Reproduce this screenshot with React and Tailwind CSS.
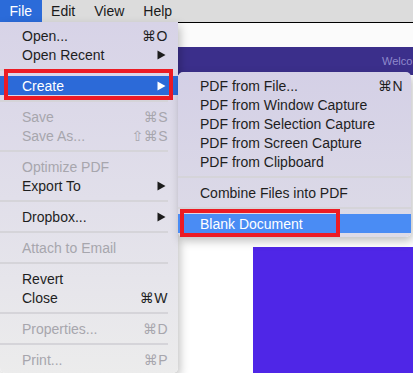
import React from 'react';

const FONT = { fontFamily: '"Liberation Sans", Arial, "DejaVu Sans", sans-serif' };

function Arrow({ white }) {
  return (
    <svg width="9" height="10" viewBox="0 0 9 10" className="shrink-0">
      <polygon points="0.5,0.5 8.5,5 0.5,9.5" fill={white ? '#ffffff' : '#1c1c1c'} />
    </svg>
  );
}

function Item({ label, shortcut, arrow, disabled, active, activeColor, box, boxClass }) {
  const text = active ? 'text-white' : disabled ? 'text-[#a7a6ad]' : 'text-[#1e1e1e]';
  return (
    <div
      className={`relative h-[19px] flex items-center justify-between pl-[22px] ${text} ${active ? activeColor : ''}`}
    >
      <span>{label}</span>
      {shortcut && <span className="tracking-[0.5px]">{shortcut}</span>}
      {arrow && (
        <span className="pr-[2px]">
          <Arrow white={active} />
        </span>
      )}
      {box && <div className={`absolute border-[4px] border-[#ec1b24] ${boxClass}`} />}
    </div>
  );
}

function Sep() {
  return (
    <div className="h-[12px] flex items-center">
      <div className="w-full h-[2px] bg-[#d5d4d9]" />
    </div>
  );
}

export default function App() {
  return (
    <div className="relative w-[413px] h-[373px] overflow-hidden bg-white text-[14px] leading-none" style={FONT}>
      {/* menu bar */}
      <div className="h-[22px] bg-[#dcdcdc] flex items-center text-[#1a1a1a]">
        <div className="h-full flex items-center px-[9.5px] bg-[#2b6bd9] text-white">File</div>
        <div className="h-full flex items-center px-[9.5px]">Edit</div>
        <div className="h-full flex items-center px-[9.5px]">View</div>
        <div className="h-full flex items-center px-[9.5px]">Help</div>
      </div>

      {/* app window behind */}
      <div className="border-t border-black">
        <div className="h-[24px] bg-[#fbfbfb]" />
        <div className="h-[28px] bg-[#3b2f8b] flex items-center pl-[382px] overflow-hidden">
          <span className="text-[11px] text-[#8f89cb] whitespace-nowrap">Welco</span>
        </div>
        <div className="pt-[172px] pl-[253px]">
          <div className="h-[130px] bg-[#4f26e7]" />
        </div>
      </div>

      {/* File menu */}
      <div className="absolute left-0 top-[22px] w-[178px] h-[351px] pt-[4px] pb-[4px] pr-[10px] rounded-b-[5px] bg-gradient-to-b from-[#d7d3e7] via-[#e1dfea] to-[#ececec] shadow-[2px_4px_10px_rgba(0,0,0,0.25)]">
        <div className="-mr-[10px] pr-[10px]">
          <Item label="Open..." shortcut="⌘O" />
          <Item label="Open Recent" arrow />
          <Sep />
          <div className="-mr-[10px]">
            <div className="pr-[10px] bg-[#2c6ad8]">
              <Item label="Create" arrow active box boxClass="left-[4px] -top-[7px] w-[169px] h-[31px]" />
            </div>
          </div>
          <Sep />
          <Item label="Save" shortcut="⌘S" disabled />
          <Item label="Save As..." shortcut="⇧⌘S" disabled />
          <Sep />
          <Item label="Optimize PDF" disabled />
          <Item label="Export To" arrow />
          <Sep />
          <Item label="Dropbox..." arrow />
          <Sep />
          <Item label="Attach to Email" disabled />
          <Sep />
          <Item label="Revert" />
          <Item label="Close" shortcut="⌘W" />
          <Sep />
          <Item label="Properties..." shortcut="⌘D" disabled />
          <Sep />
          <Item label="Print..." shortcut="⌘P" disabled />
        </div>
      </div>

      {/* Create submenu */}
      <div className="absolute left-[178px] top-[72px] w-[233px] pt-[4px] pb-[4px] rounded-[5px] bg-gradient-to-b from-[#d4d0e6] to-[#dddbe7] shadow-[2px_4px_10px_rgba(0,0,0,0.25)]">
        <div className="pr-[8px]">
          <Item label="PDF from File..." shortcut="⌘N" />
          <Item label="PDF from Window Capture" />
          <Item label="PDF from Selection Capture" />
          <Item label="PDF from Screen Capture" />
          <Item label="PDF from Clipboard" />
        </div>
        <Sep />
        <div className="pr-[8px]">
          <Item label="Combine Files into PDF" />
        </div>
        <Sep />
        <div className="bg-[#4a8cf4]">
          <Item label="Blank Document" active box boxClass="left-[2px] -top-[5px] w-[160px] h-[28px]" />
        </div>
      </div>
    </div>
  );
}
